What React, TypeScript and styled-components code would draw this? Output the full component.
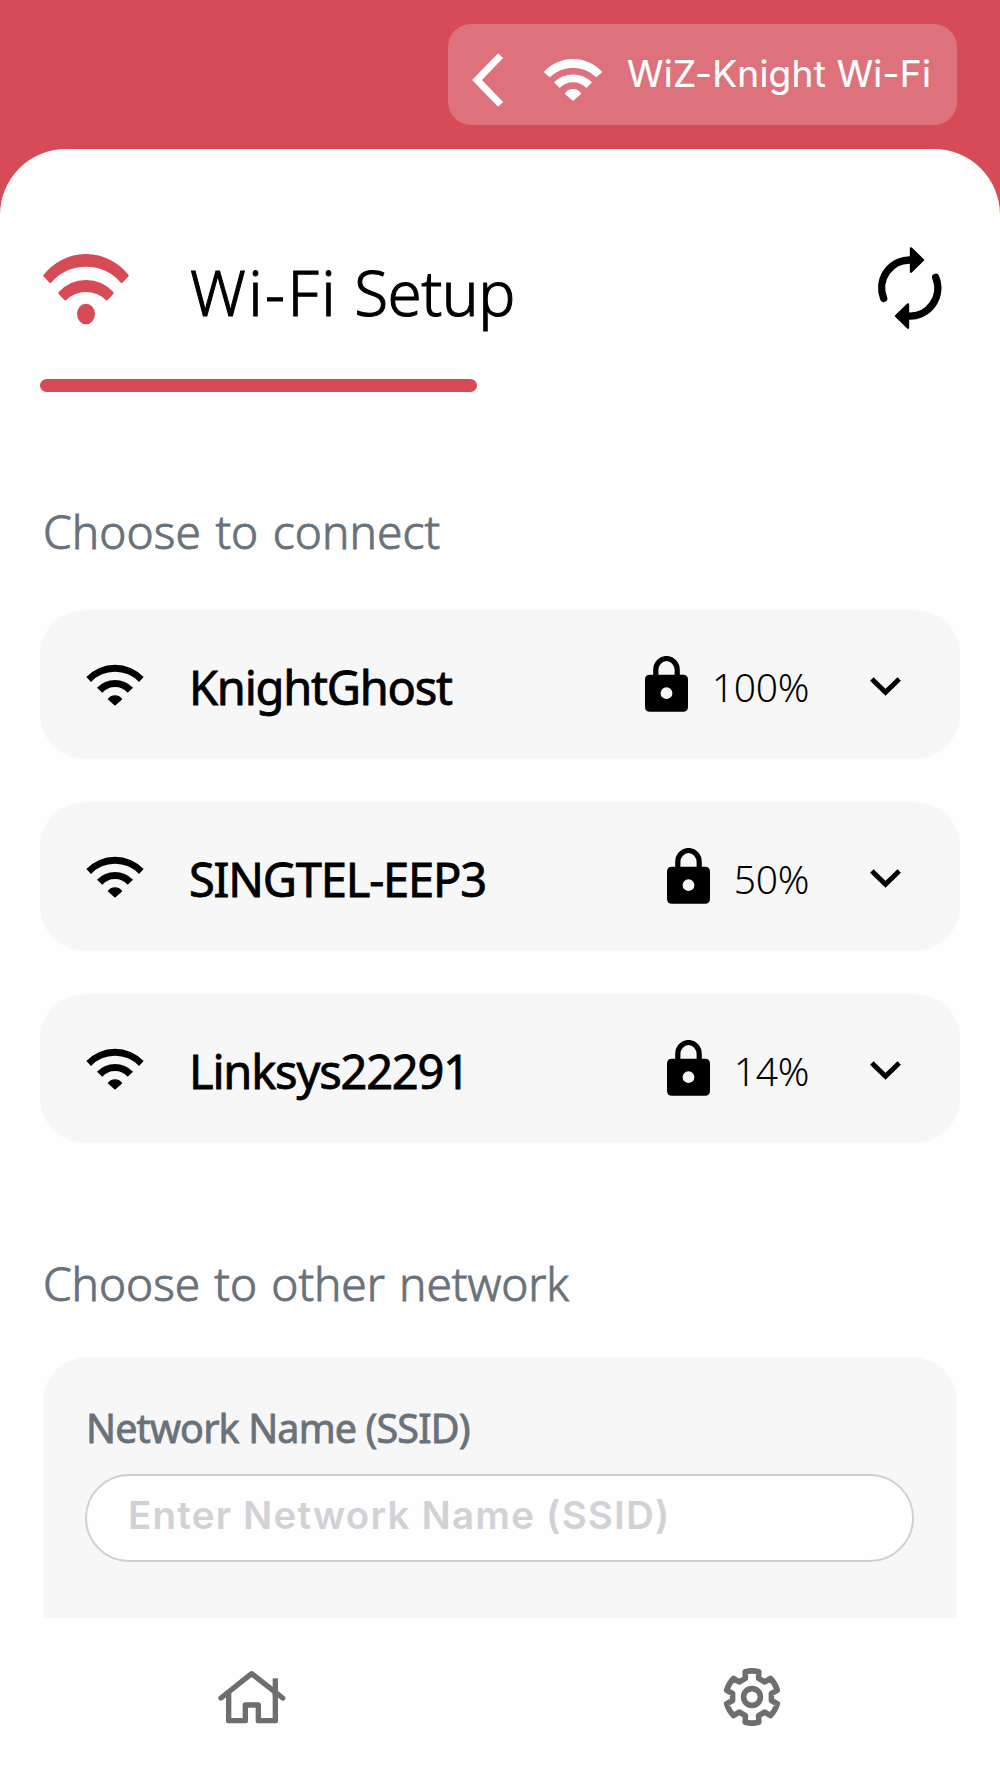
import React from "react";
import styled, { createGlobalStyle } from "styled-components";

const RED = "#d64b56";
const GREY = "#69727a";
const PANEL = "#f7f7f7";

const GlobalStyle = createGlobalStyle`
  *, *::before, *::after { box-sizing: border-box; }
  body { margin: 0; background: ${RED}; }
`;

const Screen = styled.div`
  display: flex;
  flex-direction: column;
  width: 1000px;
  height: 1778px;
  overflow: hidden;
  background: ${RED};
  color: #000;
  font-family: "Noto Sans", "Open Sans", sans-serif;
`;

const TopBar = styled.header`
  display: flex;
  justify-content: flex-end;
  flex: none;
  height: 149px;
  padding: 24px 43px 0 0;
`;

const BackButton = styled.button`
  display: flex;
  align-items: center;
  width: 509px;
  height: 101px;
  padding: 11px 0 0 24px;
  border: 0;
  border-radius: 23px;
  background: #dd727c;
  color: #fff;
`;

const BackWifi = styled.span`
  display: flex;
  margin-left: 39px;
`;

const BackLabel = styled.span`
  margin: 0 0 12px 24px;
  font-family: Inter, sans-serif;
  font-size: 37px;
  line-height: 48px;
  letter-spacing: 0.24px;
  white-space: nowrap;
  -webkit-text-stroke: 0.2px #fff;
`;

const Sheet = styled.main`
  display: flex;
  flex-direction: column;
  flex: 1;
  min-height: 0;
  border-radius: 66px 66px 0 0;
  background: #fefefe;
`;

const Content = styled.div`
  display: flex;
  flex-direction: column;
  flex: 1;
  min-height: 0;
  overflow: hidden;
  padding: 90px 40px 0;
`;

const TitleRow = styled.div`
  display: flex;
  align-items: center;
  flex: none;
  height: 100px;
  padding: 0 17px 0 2.6px;
`;

const Title = styled.h1`
  flex: 1;
  margin: 5px 0 0 61.4px;
  font-size: 62px;
  font-weight: 300;
  line-height: 84px;
  letter-spacing: -0.5px;
  word-spacing: 0.5px;
  -webkit-text-stroke: 1px #000;
`;

const TitleLead = styled.span`
  letter-spacing: 2.4px;
`;

const IconButton = styled.button`
  display: flex;
  padding: 0 0 2px;
  border: 0;
  background: none;
  color: inherit;
`;

const TitleRule = styled.div`
  flex: none;
  width: 437px;
  height: 13px;
  margin-top: 40px;
  border-radius: 7px;
  background: ${RED};
`;

const SectionLabel = styled.h2<{ $top: number; $bottom: number; $tracking: number }>`
  flex: none;
  margin: ${(p) => p.$top}px 0 ${(p) => p.$bottom}px 3px;
  color: ${GREY};
  font-size: 46px;
  font-weight: 300;
  line-height: 60px;
  letter-spacing: ${(p) => p.$tracking}px;
  word-spacing: 2.4px;
  -webkit-text-stroke: 0.9px ${GREY};
`;

const NetworkList = styled.ul`
  display: flex;
  flex-direction: column;
  flex: none;
  gap: 43px;
  margin: 0;
  padding: 0;
  list-style: none;
`;

const NetworkRow = styled.li`
  display: flex;
  align-items: center;
  height: 149px;
  padding: 0 58px 0 46px;
  border-radius: 45px;
  background: ${PANEL};
`;

const NetworkName = styled.span<{ $tracking: number }>`
  flex: 1;
  margin: 4px 0 0 45px;
  font-size: 47px;
  line-height: 66px;
  letter-spacing: ${(p) => p.$tracking}px;
  -webkit-text-stroke: 0.8px #000;
`;

const Lock = styled.span`
  display: flex;
  margin-bottom: 2px;
`;

const Strength = styled.span`
  margin: 4px 61px 0 24px;
  font-size: 39px;
  font-weight: 300;
  line-height: 52px;
  letter-spacing: -0.3px;
`;

const Chevron = styled.span`
  display: flex;
  margin-top: 3px;
`;

const ManualCard = styled.form`
  display: flex;
  flex-direction: column;
  flex: 1;
  margin: 0 3px;
  padding: 44px 43px 0;
  border-radius: 45px 45px 0 0;
  background: ${PANEL};
`;

const FieldLabel = styled.label`
  color: ${GREY};
  font-size: 39.5px;
  line-height: 54px;
  letter-spacing: -0.87px;
  -webkit-text-stroke: 0.8px ${GREY};
`;

const Field = styled.input`
  width: 829px;
  height: 88px;
  margin: 19px 0 0 -1px;
  padding: 0 40px 7px 41px;
  border: 2.5px solid #cfcfd5;
  border-radius: 44px;
  outline: 0;
  background: #fefefe;
  font: 600 38.5px/48px Inter, sans-serif;
  letter-spacing: 1.2px;
  &::placeholder { color: #d1d2d6; opacity: 1; }
`;

const NavBar = styled.nav`
  display: grid;
  grid-template-columns: 1fr 1fr;
  flex: none;
  height: 160px;
  padding-left: 3px;
  color: #6e6e6e;
`;

const NavItem = styled.button`
  display: flex;
  align-items: center;
  justify-content: center;
  padding: 0 0 2px;
  border: 0;
  background: none;
  color: inherit;
`;

const WifiGlyph = () => (
  <svg width="58" height="42" viewBox="-87 523 174 126" fill="currentColor">
    <path d="M-86 562A118.4 118.4 0 0 1 86 562L72 577A99 99 0 0 0 -72 577Z" />
    <path d="M-54 594A75 75 0 0 1 54 594L38 609A51 51 0 0 0 -38 609Z" />
    <path d="M-22 629A26 26 0 0 1 22 629L0 648Z" />
  </svg>
);

const WifiBoldGlyph = () => (
  <svg width="60" height="42" viewBox="-90 178 180 126" fill="currentColor">
    <path d="M-88 217A118.8 118.8 0 0 1 88 217L70 233A99 99 0 0 0 -70 233Z" />
    <path d="M-57 248A80 80 0 0 1 57 248L40 265A55.6 55.6 0 0 0 -40 265Z" />
    <path d="M-25 282A29 29 0 0 1 25 282L0 304Z" />
  </svg>
);

const WifiTitleGlyph = () => (
  <svg width="86" height="72" viewBox="-129 369 258 216" fill={RED} stroke={RED} strokeWidth="8" strokeLinejoin="round">
    <path d="M-124 437A157 157 0 0 1 124 437L107 455A142 142 0 0 0 -107 455Z" />
    <path d="M-79 489A106 106 0 0 1 79 489L62 507A89 89 0 0 0 -62 507Z" />
    <ellipse cx="0" cy="552" rx="23" ry="27" />
  </svg>
);

const BackGlyph = () => (
  <svg width="32" height="54" viewBox="0 0 32 54" fill="none" stroke="currentColor" strokeWidth="7">
    <path d="M28.6 2.6L5 27L28.6 51.4" />
  </svg>
);

const RefreshGlyph = () => (
  <svg width="66" height="86" viewBox="110 75 198 258" fill="none" stroke="currentColor" strokeWidth="22" strokeLinecap="round">
    <path d="M130 235A84 84 0 0 1 212 120M286 172A84 84 0 0 1 203 288" />
    <path d="M212 85L248 120L212 155ZM203 253L167 288L203 323Z" fill="currentColor" strokeWidth="7" strokeLinejoin="round" />
  </svg>
);

const LockGlyph = () => (
  <svg width="43" height="56" viewBox="0 0 43 56">
    <path d="M10.8 22V14a10.7 11.5 0 0 1 21.4 0V22" fill="none" stroke="currentColor" strokeWidth="5.2" />
    <path
      fill="currentColor"
      fillRule="evenodd"
      d="M5 18.8H38Q43 18.8 43 23.8V50.8Q43 55.8 38 55.8H5Q0 55.8 0 50.8V23.8Q0 18.8 5 18.8ZM21.5 31.3a5.9 5.9 0 1 0 0 11.8a5.9 5.9 0 1 0 0-11.8Z"
    />
  </svg>
);

const ChevronGlyph = () => (
  <svg width="32" height="19" viewBox="0 0 32 19" fill="none" stroke="currentColor" strokeWidth="5">
    <path d="M1.8 2L15.5 15.2L29.2 2" />
  </svg>
);

const HomeGlyph = () => (
  <svg width="70" height="56" viewBox="111 206 210 168" fill="none" stroke="currentColor" strokeWidth="16" strokeLinecap="round" strokeLinejoin="round">
    <path d="M123 293L215 220L308 293" />
    <path d="M146 277V361H196V314H235V361H286V277" />
    <path d="M286 276V242" strokeLinecap="square" />
  </svg>
);

const gearOutline = [0, 60, 120, 180, 240, 300]
  .map((deg) => {
    const turn = (x: number, y: number) => {
      const a = (deg * Math.PI) / 180;
      const px = x * Math.cos(a) - y * Math.sin(a);
      const py = x * Math.sin(a) + y * Math.cos(a);
      return `${px.toFixed(2)} ${py.toFixed(2)}`;
    };
    return `${turn(-6.6, -18.6)}L${turn(-6.8, -25.3)}Q${turn(0, -27)} ${turn(6.8, -25.3)}L${turn(6.6, -18.6)}`;
  })
  .join("L");

const GearGlyph = () => (
  <svg width="60" height="60" viewBox="-31 -30 60 60" fill="none" stroke="currentColor" strokeWidth="5.6" strokeLinejoin="round">
    <path d={`M${gearOutline}Z`} />
    <circle r="8.4" />
  </svg>
);

const networks = [
  { name: "KnightGhost", strength: "100%", tracking: -1.25 },
  { name: "SINGTEL-EEP3", strength: "50%", tracking: -1.2 },
  { name: "Linksys22291", strength: "14%", tracking: -1.2 },
];

export default function App() {
  return (
    <Screen>
      <GlobalStyle />
      <TopBar>
        <BackButton>
          <BackGlyph />
          <BackWifi>
            <WifiBoldGlyph />
          </BackWifi>
          <BackLabel>WiZ-Knight Wi-Fi</BackLabel>
        </BackButton>
      </TopBar>
      <Sheet>
        <Content>
          <TitleRow>
            <WifiTitleGlyph />
            <Title>
              <TitleLead>Wi-Fi</TitleLead> Setup
            </Title>
            <IconButton aria-label="Refresh">
              <RefreshGlyph />
            </IconButton>
          </TitleRow>
          <TitleRule />
          <SectionLabel $top={109} $bottom={49} $tracking={0.1}>
            Choose to connect
          </SectionLabel>
          <NetworkList>
            {networks.map((n) => (
              <NetworkRow key={n.name}>
                <WifiGlyph />
                <NetworkName $tracking={n.tracking}>{n.name}</NetworkName>
                <Lock>
                  <LockGlyph />
                </Lock>
                <Strength>{n.strength}</Strength>
                <Chevron>
                  <ChevronGlyph />
                </Chevron>
              </NetworkRow>
            ))}
          </NetworkList>
          <SectionLabel $top={110} $bottom={44} $tracking={-0.05}>
            Choose to other network
          </SectionLabel>
          <ManualCard>
            <FieldLabel htmlFor="ssid">Network Name (SSID)</FieldLabel>
            <Field id="ssid" placeholder="Enter Network Name (SSID)" />
          </ManualCard>
        </Content>
        <NavBar>
          <NavItem aria-label="Home">
            <HomeGlyph />
          </NavItem>
          <NavItem aria-label="Settings">
            <GearGlyph />
          </NavItem>
        </NavBar>
      </Sheet>
    </Screen>
  );
}
